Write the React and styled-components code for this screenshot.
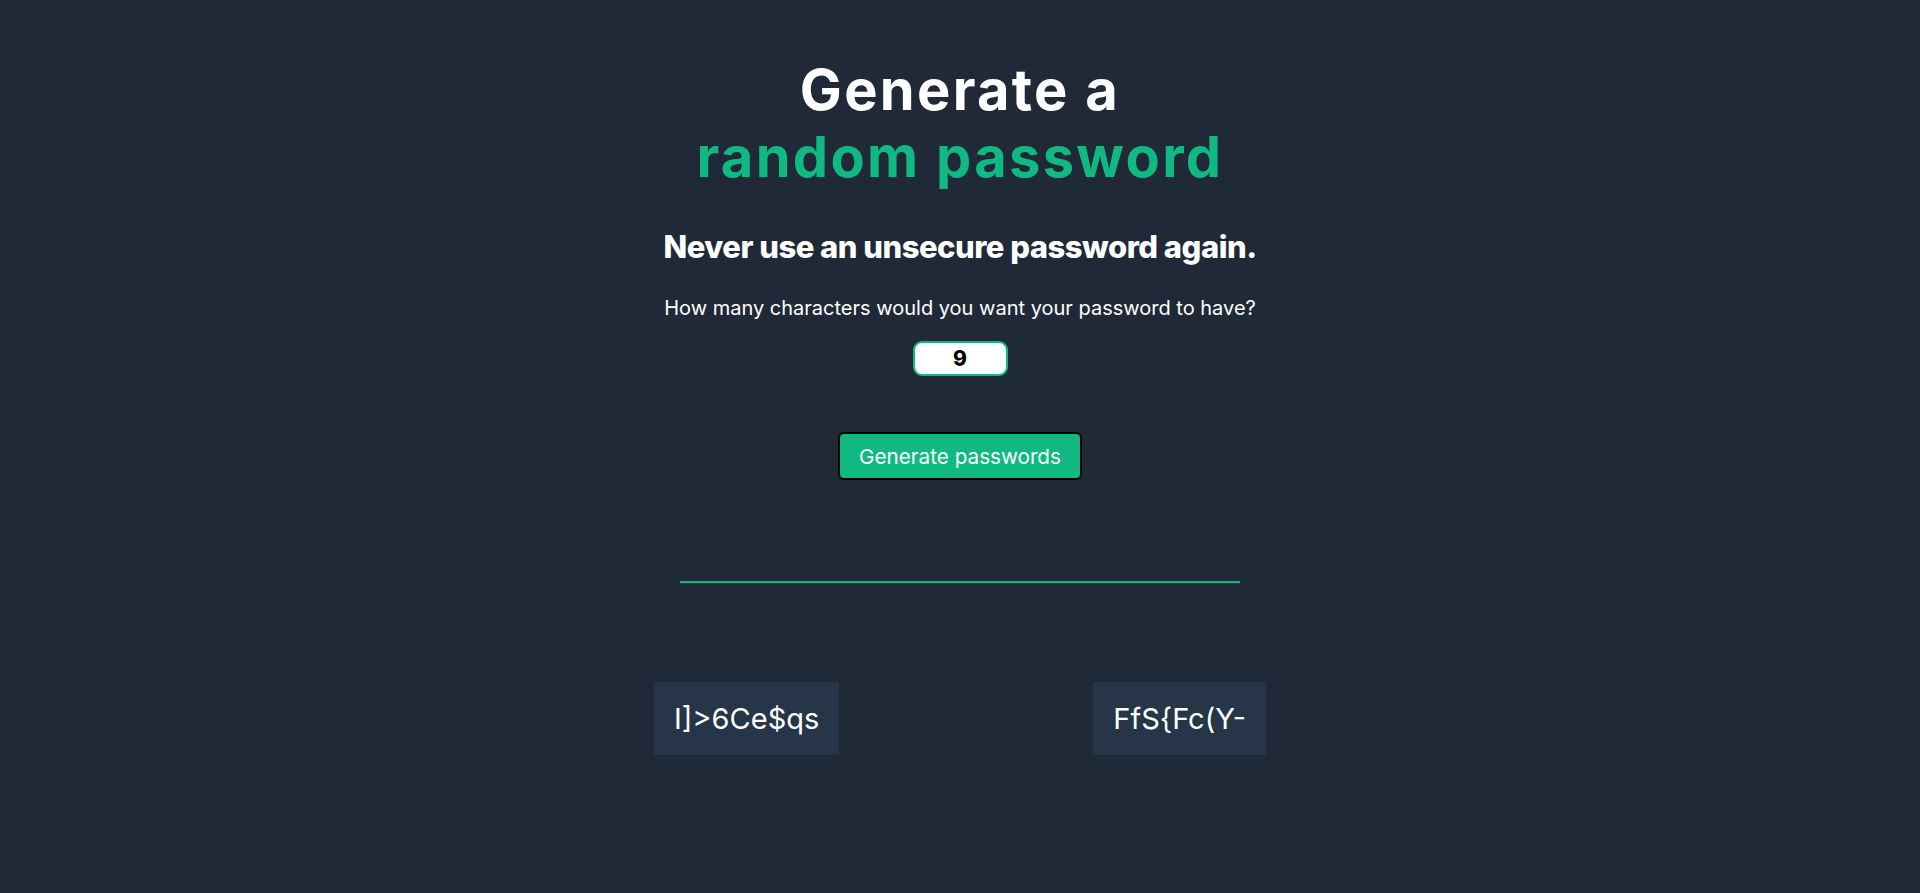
import React, { useState } from "react";
import styled, { createGlobalStyle } from "styled-components";

const GlobalStyle = createGlobalStyle`
  * { box-sizing: border-box; }
  html, body { margin: 0; padding: 0; }
  body {
    background: #1F2937;
    color: #FFFFFF;
    font-family: Inter, "Liberation Sans", sans-serif;
    min-height: 893px;
  }
`;

const Page = styled.main`
  display: flex;
  flex-direction: column;
  align-items: center;
  padding-top: 57px;
`;

const Title = styled.h1`
  margin: 0;
  font-size: 56px;
  line-height: 67px;
  font-weight: 700;
  letter-spacing: 2.3px;
  text-align: center;
`;

const Accent = styled.span`
  color: #10B981;
`;

const Subtitle = styled.h2`
  margin: 37px 0 0;
  font-size: 31px;
  line-height: 37px;
  font-weight: 800;
  letter-spacing: -0.5px;
`;

const Question = styled.p`
  margin: 31px 0 0;
  font-size: 20px;
  line-height: 24px;
  font-weight: 400;
`;

const LengthInput = styled.input`
  margin-top: 21px;
  width: 95px;
  height: 35px;
  border: 2px solid #10B981;
  border-radius: 9px;
  background: #FFFFFF;
  color: #000000;
  font-family: Inter, sans-serif;
  font-size: 21px;
  font-weight: 800;
  text-align: center;
  outline: none;
`;

const GenerateButton = styled.button`
  margin-top: 56px;
  width: 244px;
  height: 48px;
  border: 2px solid #000000;
  border-radius: 6px;
  background: #10B981;
  color: #FFFFFF;
  font-family: Inter, sans-serif;
  font-size: 20.7px;
  font-weight: 400;
  cursor: pointer;
`;

const Divider = styled.hr`
  margin: 101px 0 0;
  width: 560px;
  height: 2px;
  border: none;
  background: #10B981;
`;

const Results = styled.div`
  margin-top: 99px;
  width: 612px;
  display: flex;
  justify-content: space-between;
`;

const PasswordBox = styled.div`
  height: 73px;
  padding: 0 20px;
  display: flex;
  align-items: center;
  background: #273549;
  color: #FFFFFF;
  font-size: 29px;
  letter-spacing: 0;
`;

export default function App() {
  const [length, setLength] = useState("9");
  const passwords = ["I]>6Ce$qs", "FfS{Fc(Y-"];
  return (
    <>
      <GlobalStyle />
      <Page>
        <Title>
          Generate a
          <br />
          <Accent>random password</Accent>
        </Title>
        <Subtitle>Never use an unsecure password again.</Subtitle>
        <Question>How many characters would you want your password to have?</Question>
        <LengthInput
          type="text"
          value={length}
          onChange={(e) => setLength(e.target.value)}
        />
        <GenerateButton>Generate passwords</GenerateButton>
        <Divider />
        <Results>
          {passwords.map((p) => (
            <PasswordBox key={p}>{p}</PasswordBox>
          ))}
        </Results>
      </Page>
    </>
  );
}
